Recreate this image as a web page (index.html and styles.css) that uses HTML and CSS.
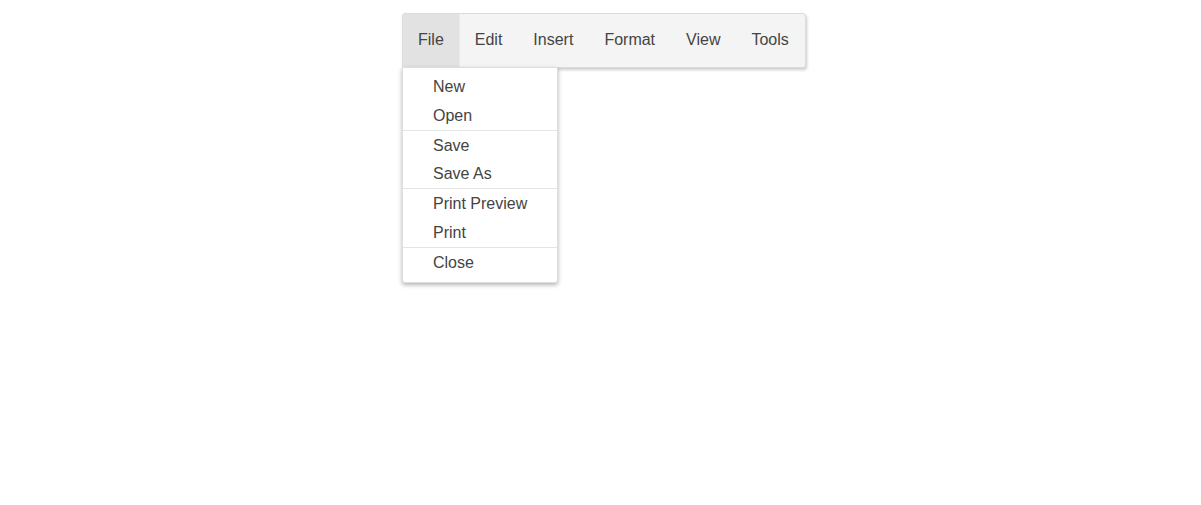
FILE: index.html
```html
<!DOCTYPE html>
<html>
<head>
<meta charset="utf-8">
<link rel="stylesheet" href="styles.css">
</head>
<body>
<div class="page">
  <div class="menu-wrap">
    <nav class="menubar">
      <div class="menu-item active">File</div>
      <div class="menu-item">Edit</div>
      <div class="menu-item">Insert</div>
      <div class="menu-item">Format</div>
      <div class="menu-item">View</div>
      <div class="menu-item">Tools</div>
    </nav>
    <ul class="dropdown">
      <li>New</li>
      <li>Open</li>
      <li class="sep"></li>
      <li>Save</li>
      <li>Save As</li>
      <li class="sep"></li>
      <li>Print Preview</li>
      <li>Print</li>
      <li class="sep"></li>
      <li>Close</li>
    </ul>
  </div>
</div>
</body>
</html>
```
FILE: styles.css
```css
html, body {
  margin: 0;
  padding: 0;
  background: #fff;
}
body {
  font-family: "Liberation Sans", Arial, sans-serif;
  font-size: 16px;
  color: #444;
}
.page {
  padding: 13px 0 0 402px;
}
.menu-wrap {
  display: inline-flex;
  flex-direction: column;
  align-items: flex-start;
  padding-bottom: 10px;
}
.menubar {
  display: flex;
  background: #f4f4f4;
  border: 1px solid #dcdcdc;
  border-radius: 3px;
  box-shadow: 1px 2px 3px rgba(0,0,0,0.2);
}
.menu-item {
  padding: 0 15px;
  height: 53px;
  line-height: 52px;
  border-right: 1px solid #f4f4f4;
}
.menu-item:last-child {
  border-right: 0;
  padding-right: 16px;
}
.menu-item.active {
  background: #e2e2e2;
  border-right-color: #ebebeb;
}
.dropdown {
  width: 154px;
  margin: -1px 0 0 0;
  padding: 4px 0 5px;
  list-style: none;
  background: #fff;
  border: 1px solid #dedede;
  border-radius: 0 0 3px 3px;
  box-shadow: 0 2px 4px rgba(0,0,0,0.3);
  position: relative;
}
.dropdown li {
  height: 28.8px;
  line-height: 29px;
  padding-left: 30px;
  white-space: nowrap;
}
.dropdown li.sep {
  height: 0;
  border-top: 1px solid #e4e4e4;
  padding: 0;
}
```
